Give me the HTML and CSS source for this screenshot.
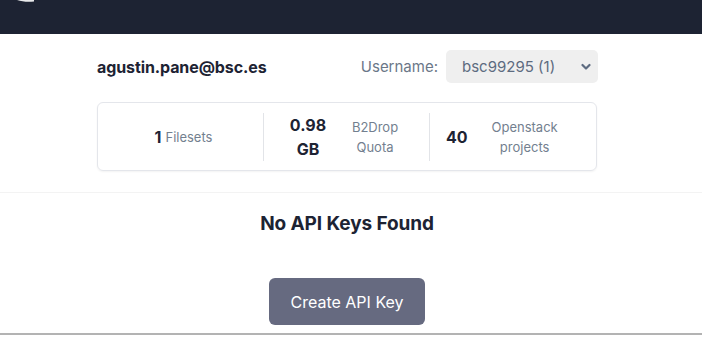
FILE: index.html
```html
<!DOCTYPE html>
<html>
<head>
<meta charset="utf-8">
<link rel="stylesheet" href="styles.css">
</head>
<body>
<header class="nav">
  <svg class="logo" width="60" height="6" viewBox="0 0 60 6"><path d="M17 0 C22 1.6 28 2.2 34 1.4 L34 0 Z" fill="#ffffff" opacity="0.9"/></svg>
</header>
<main class="page">
  <section class="profile">
    <div class="account">
      <div class="email">agustin.pane@bsc.es</div>
      <label class="user">
        <span class="user-label">Username:</span>
        <span class="select">
          <span class="select-text">bsc99295 (1)</span>
          <svg class="chev" width="10" height="8" viewBox="0 0 10 8"><path d="M1.5 2 L5 5.5 L8.5 2" fill="none" stroke="#5d6b80" stroke-width="2.2" stroke-linecap="round" stroke-linejoin="round"/></svg>
        </span>
      </label>
    </div>
    <div class="stats">
      <div class="stat stat-1">
        <span class="num">1</span><span class="lbl">Filesets</span>
      </div>
      <div class="divider"></div>
      <div class="stat stat-2">
        <span class="num num-2">0.98 GB</span><span class="lbl lbl-2">B2Drop Quota</span>
      </div>
      <div class="divider"></div>
      <div class="stat stat-3">
        <span class="num">40</span><span class="lbl lbl-3">Openstack projects</span>
      </div>
    </div>
  </section>
  <section class="keys">
    <h2 class="empty">No API Keys Found</h2>
    <button class="btn">Create API Key</button>
  </section>
</main>
</body>
</html>
```
FILE: styles.css
```css
* { box-sizing: border-box; }
html, body { margin: 0; padding: 0; background: #ffffff; }
body { font-family: Inter, "Noto Sans", sans-serif; color: #1d2333; }

.nav { height: 34px; background: #1d2333; display: flex; align-items: flex-start; }
.logo { display: block; }

.page { display: flex; flex-direction: column; }

.profile { padding: 16px 0 21px 97px; border-bottom: 1px solid #f3f3f3; }
.account { width: 501px; display: flex; align-items: center; justify-content: space-between; height: 33px; }
.email { font-weight: 700; font-size: 16px; letter-spacing: -0.1px; color: #1d2333; }
.user { display: flex; align-items: center; gap: 8px; }
.user-label { font-size: 15px; color: #6b7788; }
.select { width: 152px; height: 33px; background: #efefef; border-radius: 5px; display: flex; align-items: center; justify-content: space-between; padding: 0 7px 0 16px; }
.select-text { font-size: 15px; color: #5d6b80; }
.chev { display: block; }

.stats { margin-top: 19px; width: 500px; height: 69px; border: 1px solid #e4e6eb; border-radius: 6px; box-shadow: 0 1px 2px rgba(0,0,0,0.05); display: flex; align-items: center; }
.divider { width: 1px; height: 48px; background: #e2e4e8; flex: none; }
.stat { height: 100%; display: flex; align-items: center; flex: none; min-width: 0; }
.stat-1 { width: 165px; justify-content: center; gap: 4px; padding-left: 6px; }
.stat-2 { width: 165px; padding-left: 25px; gap: 20px; }
.stat-3 { flex: 1 1 0; padding-left: 16px; gap: 17px; }
.num { font-weight: 700; font-size: 16px; color: #1d2333; }
.num-2 { width: 38px; text-align: center; line-height: 24px; }
.lbl { font-size: 13px; color: #737f8f; line-height: 20px; text-align: center; }
.lbl-2 { width: 56px; }
.lbl-3 { width: 80px; }

.keys { display: flex; flex-direction: column; align-items: center; padding-right: 8px; border-bottom: 2px solid #b3b3b3; height: 142px; }
.empty { margin: 19px 0 0; font-size: 19px; font-weight: 700; letter-spacing: -0.1px; color: #1d2333; line-height: 24px; }
.btn { margin-top: 42px; width: 156px; height: 47px; border: none; border-radius: 6px; background: #666a80; color: #ffffff; font-family: Inter, "Noto Sans", sans-serif; font-size: 16px; }
```
